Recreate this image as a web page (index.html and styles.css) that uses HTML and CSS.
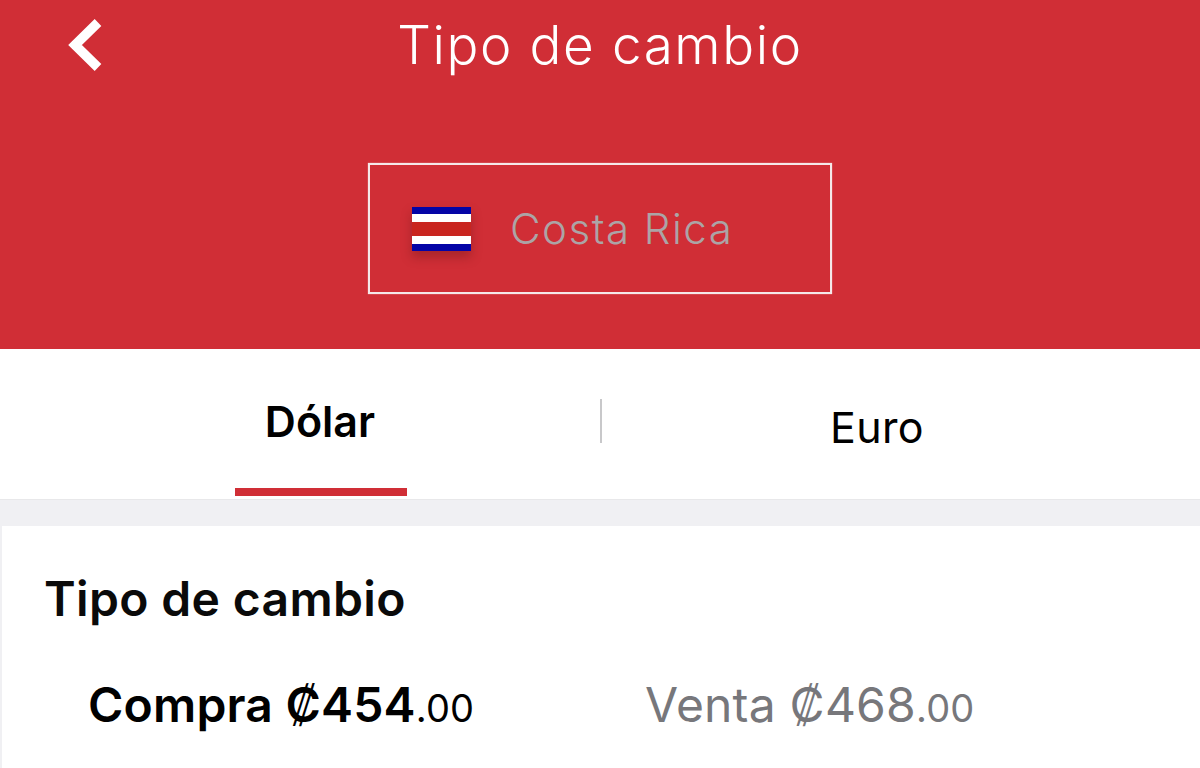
FILE: index.html
```html
<!DOCTYPE html>
<html lang="es">
<head>
    <meta charset="UTF-8">
    <meta name="viewport" content="width=device-width, initial-scale=1.0">
    <title>Tipo de cambio</title>
    <link rel="stylesheet" href="styles.css">
</head>
<body>
    <header class="top">
        <div class="top-bar">
            <svg class="back" width="38" height="54" viewBox="0 0 38 54">
                <path d="M32 4.5 L9 27 L32 49.5" fill="none" stroke="#fff" stroke-width="9.5"/>
            </svg>
            <h1>Tipo de cambio</h1>
        </div>
        <div class="country">
            <div class="flag">
                <span class="blue"></span>
                <span class="white"></span>
                <span class="red"></span>
                <span class="white"></span>
                <span class="blue"></span>
            </div>
            <span class="country-name">Costa Rica</span>
        </div>
    </header>

    <nav class="tabs">
        <div class="tab tab-left">
            <span class="tab-label">Dólar</span>
            <span class="tab-line"></span>
        </div>
        <div class="tab tab-right">
            <span class="tab-label">Euro</span>
        </div>
    </nav>

    <section class="card">
        <h2>Tipo de cambio</h2>
        <div class="rates">
            <p class="rate buy">Compra ₡454<small>.00</small></p>
            <p class="rate sell">Venta ₡468<small>.00</small></p>
        </div>
    </section>
</body>
</html>
```

FILE: styles.css
```css
body {
    margin: 0;
    height: 768px;
    overflow: hidden;
    font-family: Inter, "Liberation Sans", sans-serif;
    background-color: #f0f0f3;
}
.top {
    height: 349px;
    box-sizing: border-box;
    background-color: #d02e36;
    color: #fff;
    padding-top: 18px;
}
.top-bar {
    height: 54px;
    display: flex;
    align-items: center;
    justify-content: center;
    position: relative;
}
.back {
    position: absolute;
    left: 66px;
    top: 0;
}
h1 {
    margin: 0;
    font-size: 53px;
    font-weight: 300;
    letter-spacing: 1.6px;
}
.country {
    width: 464px;
    height: 131px;
    box-sizing: border-box;
    margin: 91px auto 0;
    border: 2px solid #f5e8e9;
    box-shadow: 0 0 1px rgba(255, 255, 255, 0.7);
    display: flex;
    align-items: center;
    padding: 0 0 0 42px;
    gap: 39px;
}
.flag {
    width: 59px;
    height: 44px;
    display: flex;
    flex-direction: column;
    box-shadow: 0 6px 10px rgba(90, 20, 20, 0.35);
}
.flag span {
    display: block;
}
.flag .blue {
    height: 7px;
    background-color: #0404a6;
}
.flag .white {
    height: 8px;
    background-color: #fff;
}
.flag .red {
    height: 14px;
    background-color: #c9251f;
}
.country-name {
    font-size: 42px;
    font-weight: 300;
    letter-spacing: 1.5px;
    color: #aca4a6;
}
.tabs {
    height: 151px;
    box-sizing: border-box;
    background-color: #fff;
    border-bottom: 1px solid #e8e8ea;
    display: flex;
    position: relative;
}
.tab {
    width: 50%;
    box-sizing: border-box;
    display: flex;
    justify-content: center;
    color: #000;
    line-height: 48px;
}
.tab-left {
    padding: 48px 0 0 40px;
    font-size: 43px;
    font-weight: 600;
}
.tab-right {
    padding: 54px 46px 0 0;
    font-size: 43px;
    letter-spacing: 0.4px;
    position: relative;
}
.tab-right::before {
    content: "";
    position: absolute;
    left: 0;
    top: 50px;
    width: 2px;
    height: 44px;
    background-color: #c8c8ca;
}
.tab-line {
    position: absolute;
    left: 235px;
    top: 139px;
    width: 172px;
    height: 8px;
    background-color: #d02e36;
}
.card {
    margin: 26px 0 0 2px;
    height: 243px;
    box-sizing: border-box;
    background-color: #fff;
    padding: 47px 0 0 42px;
}
h2 {
    margin: 0;
    font-size: 48px;
    font-weight: 600;
    letter-spacing: 0.35px;
    line-height: 52px;
    color: #0a0a0a;
}
.rates {
    display: flex;
    margin-top: 54px;
    padding-left: 44px;
}
.rate {
    margin: 0;
    font-size: 48px;
    letter-spacing: 0.2px;
    line-height: 52px;
}
.rate small {
    font-size: 38px;
    font-weight: 400;
}
.buy {
    width: 557px;
    font-weight: 600;
    color: #000;
}
.sell {
    color: #77777b;
}
```
